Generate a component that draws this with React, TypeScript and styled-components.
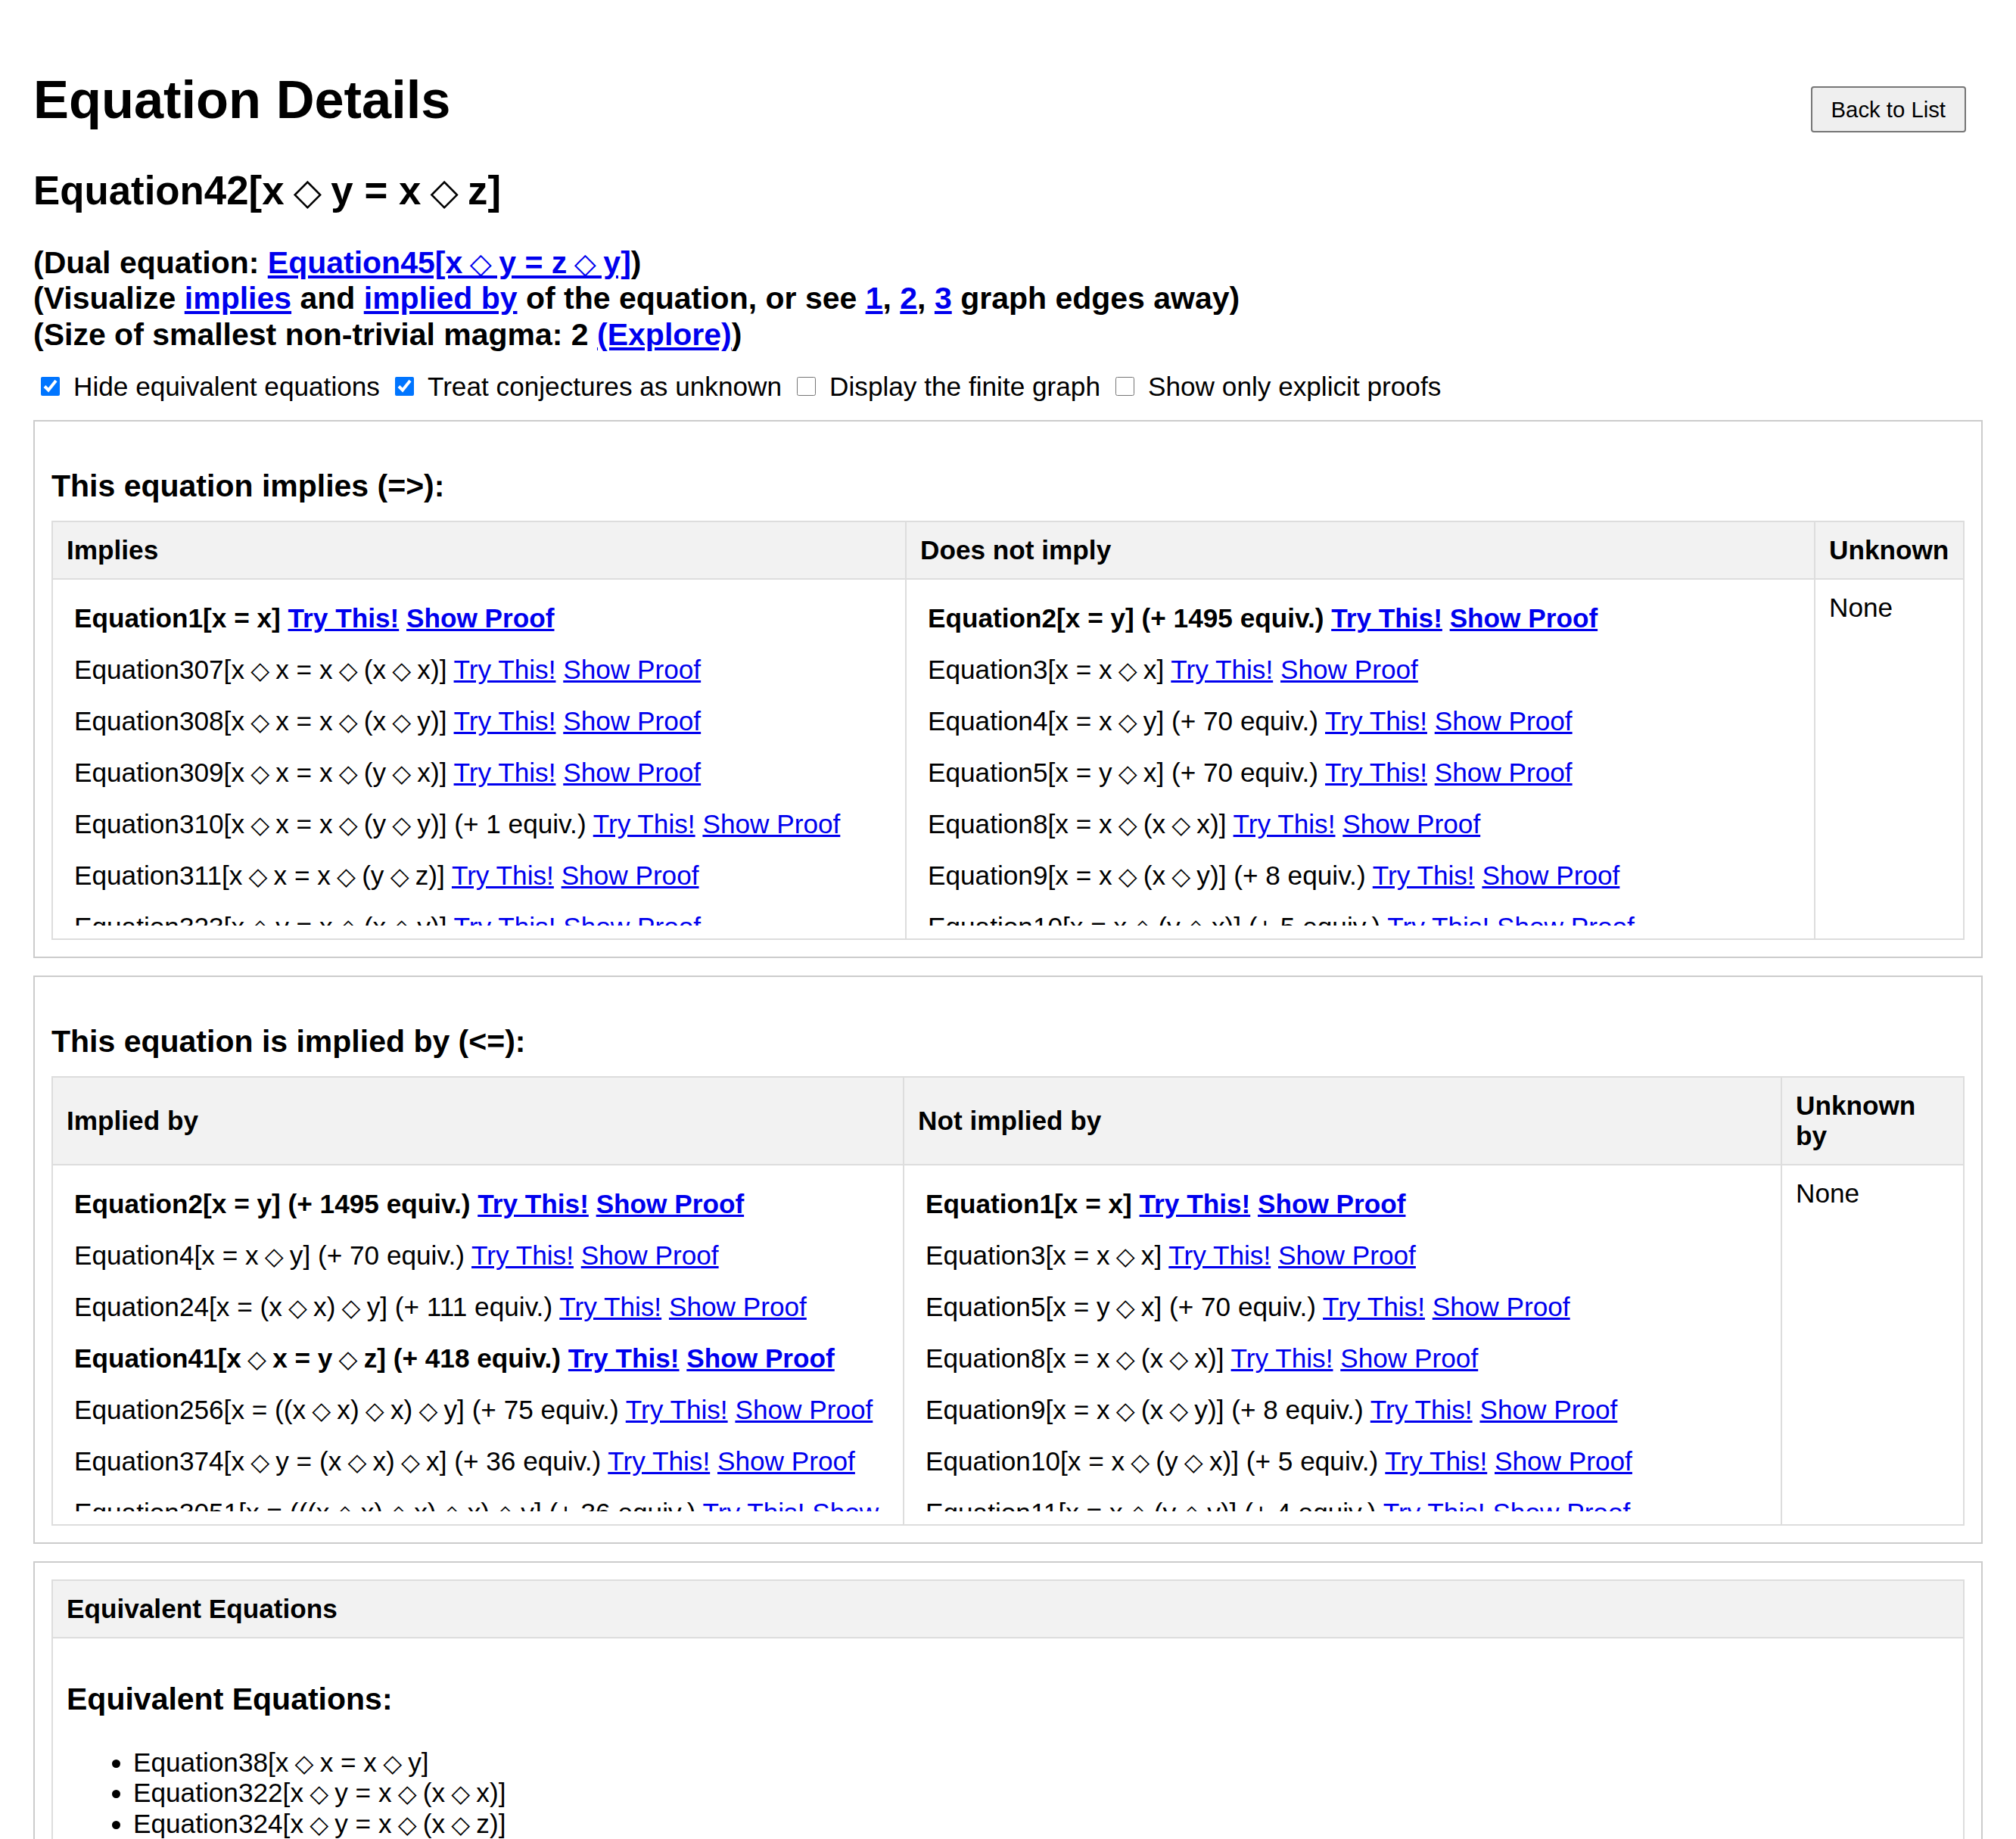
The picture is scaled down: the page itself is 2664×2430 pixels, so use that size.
import React from "react";
import styled, { createGlobalStyle } from "styled-components";

const GlobalStyle = createGlobalStyle`
  html, body {
    margin: 0;
    padding: 0;
    background: #ffffff;
  }
  body {
    font-family: "Liberation Sans", Arial, Helvetica, sans-serif;
    font-size: 35.2px;
    line-height: 40px;
    color: #000000;
  }
`;

const Page = styled.div`
  padding: 44px 44px 60px;
`;

const Header = styled.header`
  display: flex;
  justify-content: space-between;
  align-items: flex-start;
`;

const Title = styled.h1`
  margin: 47px 0 0;
  font-size: 70.4px;
  line-height: 81px;
  font-weight: 700;
`;

const BackButton = styled.button`
  margin: 70px 22px 0 0;
  padding: 12px 25px;
  font-family: inherit;
  font-size: 29.3px;
  line-height: 33px;
  color: #000;
  background: #efefef;
  border: 2px solid #767676;
  border-radius: 4px;
`;

const EquationTitle = styled.h2`
  margin: 46px 0 0;
  font-size: 52.8px;
  line-height: 61px;
  font-weight: 700;
`;

const InfoBlock = styled.div`
  margin-top: 42px;
  font-size: 41px;
  line-height: 47.3px;
  font-weight: 700;
`;

const Link = styled.a`
  color: #0000ee;
  text-decoration: underline;
  cursor: pointer;
`;

/* the ◇ operator, kept to the advance width it has in the reference */
const Op = styled.span`
  font-family: "DejaVu Sans", sans-serif;
  font-size: 0.92em;
  font-weight: 400;
  line-height: 0;
  margin: 0 -0.05em;
`;

const OptionsRow = styled.div`
  display: flex;
  align-items: center;
  margin-top: 25px;
  height: 40px;
`;

const Option = styled.label`
  display: inline-flex;
  align-items: center;
  margin-right: 10px;
  white-space: nowrap;
`;

const Checkbox = styled.input`
  width: 25px;
  height: 25px;
  margin: 0 18px 0 10px;
`;

const Section = styled.section<{ $first?: boolean }>`
  margin-top: ${(p) => (p.$first ? 24 : 23)}px;
  border: 2px solid #cccccc;
  padding: 22px;
`;

const SectionTitle = styled.h3`
  margin: 40px 0 22px;
  font-size: 41px;
  line-height: 47px;
  font-weight: 700;
`;

const Table = styled.table`
  width: 100%;
  border-collapse: collapse;
  table-layout: fixed;
`;

const Col = styled.col<{ $w: number }>`
  width: ${(p) => p.$w}px;
`;

const Th = styled.th`
  background: #f2f2f2;
  border: 2px solid #dddddd;
  padding: 17px 18px;
  text-align: left;
  font-weight: 700;
  vertical-align: middle;
`;

const Td = styled.td`
  border: 2px solid #dddddd;
  padding: 17px 18px;
  vertical-align: top;
`;

const ClipArea = styled.div`
  max-height: 440px;
  overflow: hidden;
`;

const EqItem = styled.div<{ $bold?: boolean }>`
  padding: 14px 10px;
  font-weight: ${(p) => (p.$bold ? 700 : 400)};
`;

const InnerTitle = styled.h3`
  margin: 40px 0 40px;
  font-size: 41px;
  line-height: 47px;
  font-weight: 700;
`;

const EqList = styled.ul`
  margin: 0;
  padding-left: 88px;
  list-style: disc;
`;

const EqListItem = styled.li`
  line-height: 40.5px;
`;

function MathText({ text }: { text: string }) {
  const parts = text.split("◇");
  return (
    <>
      {parts.map((p, i) => (
        <React.Fragment key={i}>
          {i > 0 && <Op>◇</Op>}
          {p}
        </React.Fragment>
      ))}
    </>
  );
}

type Eq = { text: string; bold?: boolean };

const impliesList: Eq[] = [
  { text: "Equation1[x = x]", bold: true },
  { text: "Equation307[x ◇ x = x ◇ (x ◇ x)]" },
  { text: "Equation308[x ◇ x = x ◇ (x ◇ y)]" },
  { text: "Equation309[x ◇ x = x ◇ (y ◇ x)]" },
  { text: "Equation310[x ◇ x = x ◇ (y ◇ y)] (+ 1 equiv.)" },
  { text: "Equation311[x ◇ x = x ◇ (y ◇ z)]" },
  { text: "Equation323[x ◇ y = x ◇ (x ◇ y)]" },
  { text: "Equation325[x ◇ y = x ◇ (y ◇ x)]" },
  { text: "Equation326[x ◇ y = x ◇ (y ◇ y)]" },
];

const notImpliesList: Eq[] = [
  { text: "Equation2[x = y] (+ 1495 equiv.)", bold: true },
  { text: "Equation3[x = x ◇ x]" },
  { text: "Equation4[x = x ◇ y] (+ 70 equiv.)" },
  { text: "Equation5[x = y ◇ x] (+ 70 equiv.)" },
  { text: "Equation8[x = x ◇ (x ◇ x)]" },
  { text: "Equation9[x = x ◇ (x ◇ y)] (+ 8 equiv.)" },
  { text: "Equation10[x = x ◇ (y ◇ x)] (+ 5 equiv.)" },
  { text: "Equation11[x = x ◇ (y ◇ y)] (+ 4 equiv.)" },
  { text: "Equation13[x = x ◇ (y ◇ z)]" },
];

const impliedByList: Eq[] = [
  { text: "Equation2[x = y] (+ 1495 equiv.)", bold: true },
  { text: "Equation4[x = x ◇ y] (+ 70 equiv.)" },
  { text: "Equation24[x = (x ◇ x) ◇ y] (+ 111 equiv.)" },
  { text: "Equation41[x ◇ x = y ◇ z] (+ 418 equiv.)", bold: true },
  { text: "Equation256[x = ((x ◇ x) ◇ x) ◇ y] (+ 75 equiv.)" },
  { text: "Equation374[x ◇ y = (x ◇ x) ◇ x] (+ 36 equiv.)" },
  { text: "Equation3051[x = (((x ◇ x) ◇ x) ◇ x) ◇ y] (+ 36 equiv.)" },
  { text: "Equation3253[x ◇ y = ((x ◇ x) ◇ x) ◇ x]" },
];

const notImpliedByList: Eq[] = [
  { text: "Equation1[x = x]", bold: true },
  { text: "Equation3[x = x ◇ x]" },
  { text: "Equation5[x = y ◇ x] (+ 70 equiv.)" },
  { text: "Equation8[x = x ◇ (x ◇ x)]" },
  { text: "Equation9[x = x ◇ (x ◇ y)] (+ 8 equiv.)" },
  { text: "Equation10[x = x ◇ (y ◇ x)] (+ 5 equiv.)" },
  { text: "Equation11[x = x ◇ (y ◇ y)] (+ 4 equiv.)" },
  { text: "Equation13[x = x ◇ (y ◇ z)]" },
];

const equivalents: string[] = [
  "Equation38[x ◇ x = x ◇ y]",
  "Equation322[x ◇ y = x ◇ (x ◇ x)]",
  "Equation324[x ◇ y = x ◇ (x ◇ z)]",
  "Equation3659[x ◇ y = x ◇ ((x ◇ x) ◇ x)]",
  "Equation3661[x ◇ y = x ◇ ((x ◇ x) ◇ z)]",
];

const options = [
  { label: "Hide equivalent equations", checked: true },
  { label: "Treat conjectures as unknown", checked: true },
  { label: "Display the finite graph", checked: false },
  { label: "Show only explicit proofs", checked: false },
];

function EqColumn({ items }: { items: Eq[] }) {
  return (
    <ClipArea>
      {items.map((eq) => (
        <EqItem key={eq.text} $bold={eq.bold}>
          <MathText text={eq.text} /> <Link>Try This!</Link>{" "}
          <Link>Show Proof</Link>
        </EqItem>
      ))}
    </ClipArea>
  );
}

function RelationTable({
  widths,
  headers,
  left,
  right,
}: {
  widths: number[];
  headers: string[];
  left: Eq[];
  right: Eq[];
}) {
  return (
    <Table>
      <colgroup>
        {widths.map((w, i) => (
          <Col key={i} $w={w} />
        ))}
      </colgroup>
      <thead>
        <tr>
          {headers.map((h) => (
            <Th key={h}>{h}</Th>
          ))}
        </tr>
      </thead>
      <tbody>
        <tr>
          <Td>
            <EqColumn items={left} />
          </Td>
          <Td>
            <EqColumn items={right} />
          </Td>
          <Td>None</Td>
        </tr>
      </tbody>
    </Table>
  );
}

export default function App() {
  return (
    <>
      <GlobalStyle />
      <Page>
        <Header>
          <Title>Equation Details</Title>
          <BackButton type="button">Back to List</BackButton>
        </Header>
        <EquationTitle>
          <MathText text="Equation42[x ◇ y = x ◇ z]" />
        </EquationTitle>
        <InfoBlock>
          <div>
            (Dual equation:{" "}
            <Link>
              <MathText text="Equation45[x ◇ y = z ◇ y]" />
            </Link>
            )
          </div>
          <div>
            (Visualize <Link>implies</Link> and <Link>implied by</Link> of the
            equation, or see <Link>1</Link>, <Link>2</Link>, <Link>3</Link>{" "}
            graph edges away)
          </div>
          <div>
            (Size of smallest non-trivial magma: 2 <Link>(Explore)</Link>)
          </div>
        </InfoBlock>
        <OptionsRow>
          {options.map((o) => (
            <Option key={o.label}>
              <Checkbox type="checkbox" defaultChecked={o.checked} />
              {o.label}
            </Option>
          ))}
        </OptionsRow>

        <Section $first>
          <SectionTitle>This equation implies (=&gt;):</SectionTitle>
          <RelationTable
            widths={[1128, 1201, 197]}
            headers={["Implies", "Does not imply", "Unknown"]}
            left={impliesList}
            right={notImpliesList}
          />
        </Section>

        <Section>
          <SectionTitle>This equation is implied by (&lt;=):</SectionTitle>
          <RelationTable
            widths={[1125, 1160, 241]}
            headers={["Implied by", "Not implied by", "Unknown by"]}
            left={impliedByList}
            right={notImpliedByList}
          />
        </Section>

        <Section>
          <Table>
            <thead>
              <tr>
                <Th>Equivalent Equations</Th>
              </tr>
            </thead>
            <tbody>
              <tr>
                <Td>
                  <InnerTitle>Equivalent Equations:</InnerTitle>
                  <EqList>
                    {equivalents.map((e) => (
                      <EqListItem key={e}>
                        <MathText text={e} />
                      </EqListItem>
                    ))}
                  </EqList>
                </Td>
              </tr>
            </tbody>
          </Table>
        </Section>
      </Page>
    </>
  );
}
